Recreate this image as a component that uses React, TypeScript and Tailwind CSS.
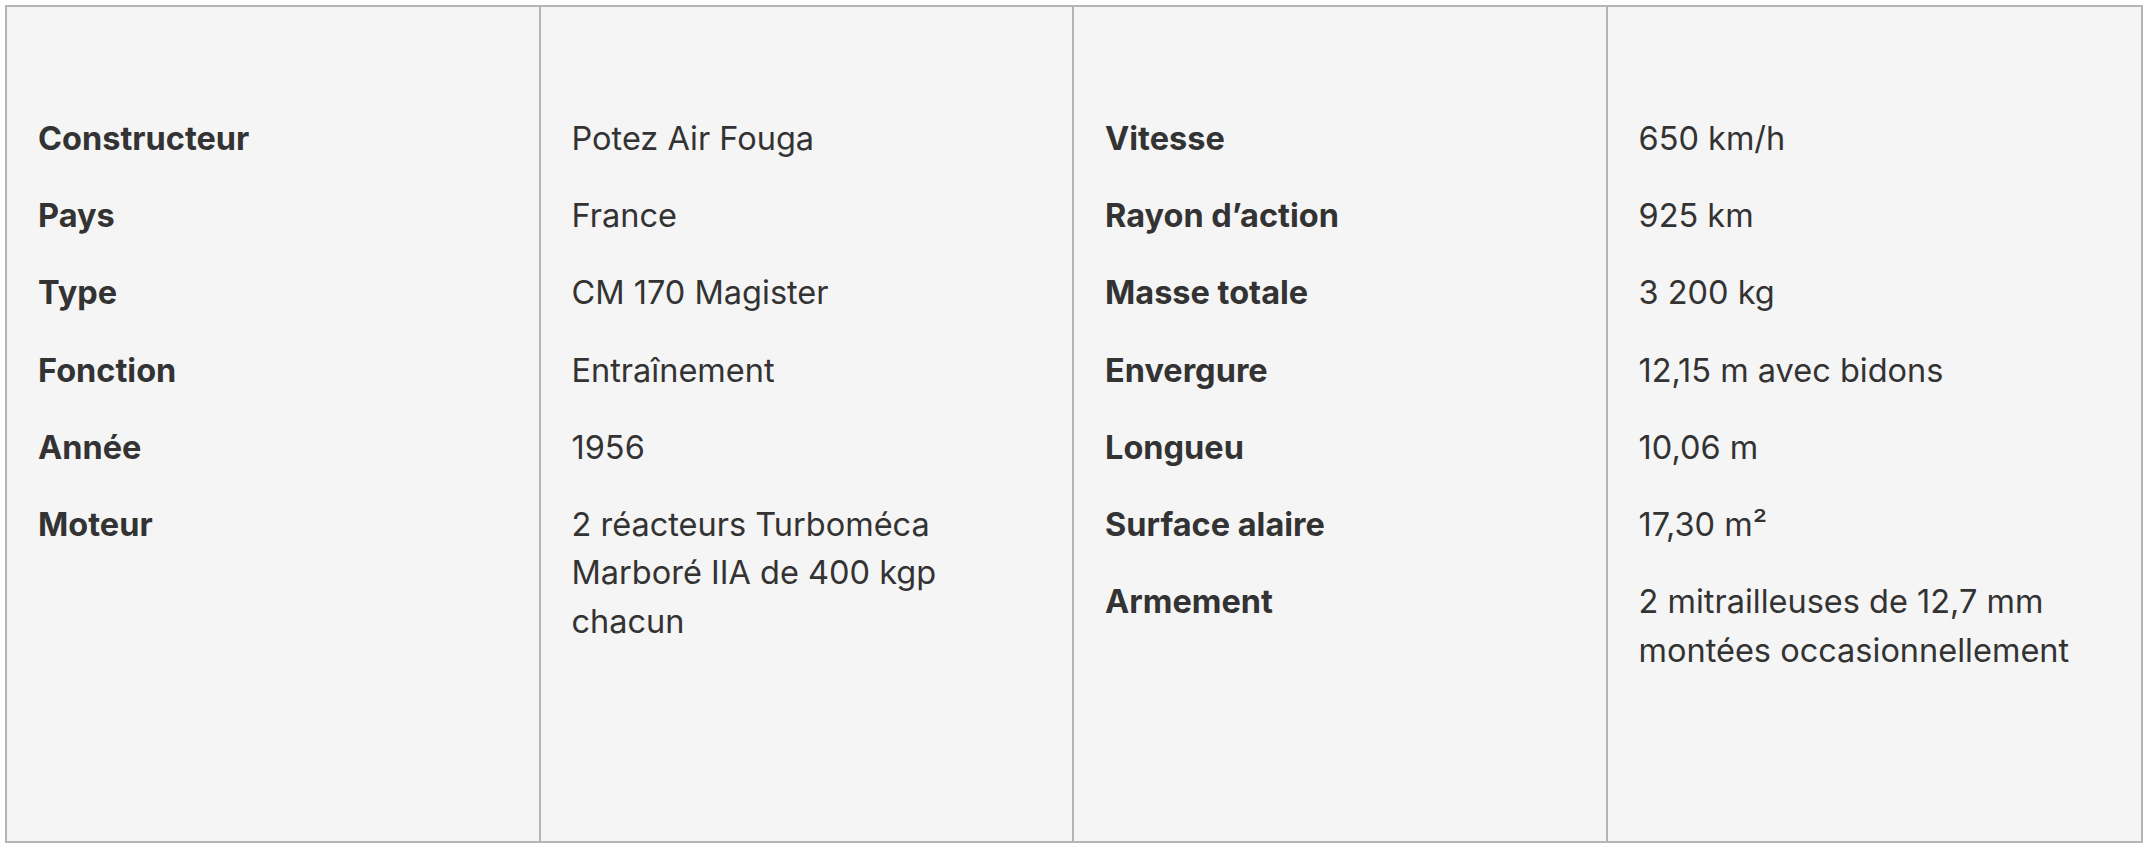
const left: [string, string][] = [
  ["Constructeur", "Potez Air Fouga"],
  ["Pays", "France"],
  ["Type", "CM 170 Magister"],
  ["Fonction", "Entraînement"],
  ["Année", "1956"],
  ["Moteur", "2 réacteurs Turboméca Marboré IIA de 400 kgp chacun"],
];

const right: [string, string][] = [
  ["Vitesse", "650 km/h"],
  ["Rayon d’action", "925 km"],
  ["Masse totale", "3 200 kg"],
  ["Envergure", "12,15 m avec bidons"],
  ["Longueu", "10,06 m"],
  ["Surface alaire", "17,30 m²"],
  ["Armement", "2 mitrailleuses de 12,7 mm montées occasionnellement"],
];

function Col({ items, bold }: { items: string[]; bold?: boolean }) {
  return (
    <div className="pt-[108px] px-[31px] flex flex-col gap-[28.8px]">
      {items.map((t, i) => (
        <p
          key={i}
          className={
            bold
              ? "text-[32.5px] leading-[48.4px] font-bold text-[#333333]"
              : "text-[32.5px] leading-[48.4px] font-normal text-[#333333]"
          }
        >
          {t}
        </p>
      ))}
    </div>
  );
}

export default function App() {
  return (
    <div className="w-[2150px] h-[856px] bg-white p-[5px]" style={{ fontFamily: "Inter, 'Noto Sans', sans-serif" }}>
      <div className="w-[2138px] h-[838px] border-2 border-[#b5b5b5] bg-[#f5f5f5] grid grid-cols-4 divide-x-2 divide-[#b5b5b5]">
        <Col items={left.map((r) => r[0])} bold />
        <Col items={left.map((r) => r[1])} />
        <Col items={right.map((r) => r[0])} bold />
        <Col items={right.map((r) => r[1])} />
      </div>
    </div>
  );
}
